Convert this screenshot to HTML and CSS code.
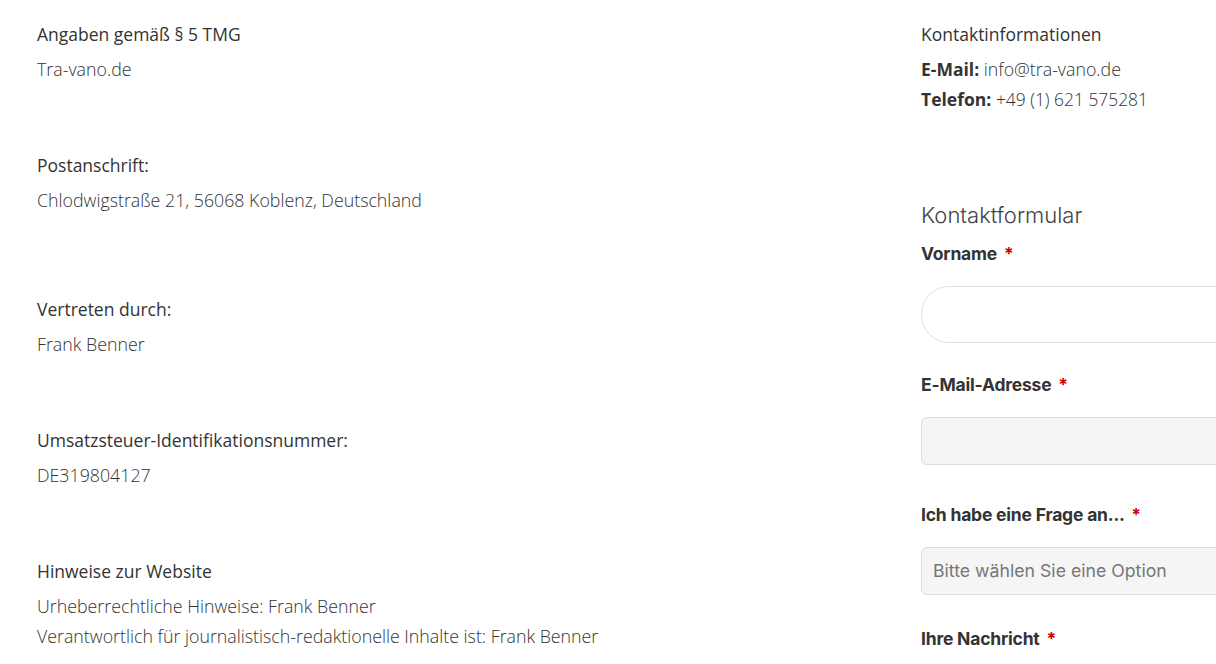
FILE: index.html
```html
<!DOCTYPE html>
<html lang="de">
<head>
  <meta charset="UTF-8">
  <title>Impressum – Tra-vano.de</title>
  <link rel="stylesheet" href="styles.css">
</head>
<body>

<div class="page">
  <div class="imprint">
    <div class="group">
      <p class="head">Angaben gemäß § 5 TMG</p>
      <p class="text">Tra-vano.de</p>
    </div>
    <div class="group group-wide">
      <p class="head">Postanschrift:</p>
      <p class="text">Chlodwigstraße 21, 56068 Koblenz, Deutschland</p>
    </div>
    <div class="group">
      <p class="head">Vertreten durch:</p>
      <p class="text">Frank Benner</p>
    </div>
    <div class="group">
      <p class="head">Umsatzsteuer-Identifikationsnummer:</p>
      <p class="text">DE319804127</p>
    </div>
    <div class="group">
      <p class="head">Hinweise zur Website</p>
      <p class="text">Urheberrechtliche Hinweise: Frank Benner<br>
      Verantwortlich für journalistisch-redaktionelle Inhalte ist: Frank Benner</p>
    </div>
  </div>

  <div class="contact">
    <p class="head">Kontaktinformationen</p>
    <p class="text"><b>E-Mail:</b> info@tra-vano.de<br>
    <b>Telefon:</b> <span class="phone">+49 (1) 621 575281</span></p>

    <form class="form">
      <h2>Kontaktformular</h2>
      <div class="field field-first">
        <label for="vorname">Vorname <span class="req">*</span></label>
        <input id="vorname" type="text" class="input input-round">
      </div>
      <div class="field field-wide">
        <label for="email">E-Mail-Adresse <span class="req">*</span></label>
        <input id="email" type="email" class="input">
      </div>
      <div class="field field-select">
        <label for="frage">Ich habe eine Frage an... <span class="req">*</span></label>
        <div class="input select">Bitte wählen Sie eine Option</div>
      </div>
      <div class="field">
        <label for="nachricht">Ihre Nachricht <span class="req">*</span></label>
      </div>
    </form>
  </div>
</div>

</body>
</html>
```

FILE: styles.css
```css
html, body {
  overflow: hidden;
}
body {
  margin: 0;
  background: #fff;
  font-family: "Open Sans", sans-serif;
  color: #333;
}
.page {
  display: grid;
  grid-template-columns: 884px 400px;
  padding: 19px 0 0 37px;
  width: 1400px;
}
p {
  margin: 0;
}
.head {
  font-size: 17.5px;
  line-height: 30px;
  color: #333;
}
.text {
  font-size: 17.8px;
  line-height: 30px;
  font-weight: 300;
  color: #333;
  margin-top: 5px;
}
.text b {
  font-weight: 700;
  font-size: 17.5px;
  color: #333;
}
.phone {
  font-size: 17.4px;
}
.group {
  margin-bottom: 66px;
}
.group-wide {
  margin-bottom: 79px;
}
.form {
  font-family: "Inter", sans-serif;
  margin-top: 87px;
}
.form h2 {
  font-size: 22px;
  font-weight: 300;
  color: #444;
  margin: 0 0 15px;
  line-height: 28px;
}
.field {
  margin-bottom: 33px;
}
.field-first {
  margin-bottom: 32px;
}
.field-wide {
  margin-bottom: 40px;
}
.field-select {
  margin-bottom: 34px;
}
.field label {
  display: block;
  font-size: 17.5px;
  font-weight: 700;
  color: #333;
  line-height: 20px;
  letter-spacing: -0.2px;
}
.req {
  color: #cc0000;
  margin-left: 3px;
}
.input {
  display: block;
  box-sizing: border-box;
  width: 380px;
  height: 48px;
  margin-top: 22px;
  border: 1px solid #ddd;
  border-radius: 6px;
  background: #f5f5f5;
  font-family: "Inter", sans-serif;
  font-size: 17.7px;
  padding: 0 11px;
}
.input-round {
  height: 57px;
  border-radius: 28px;
  background: #fff;
  border-color: #e0e0e0;
}
.select {
  line-height: 46px;
  color: #777;
}
```
